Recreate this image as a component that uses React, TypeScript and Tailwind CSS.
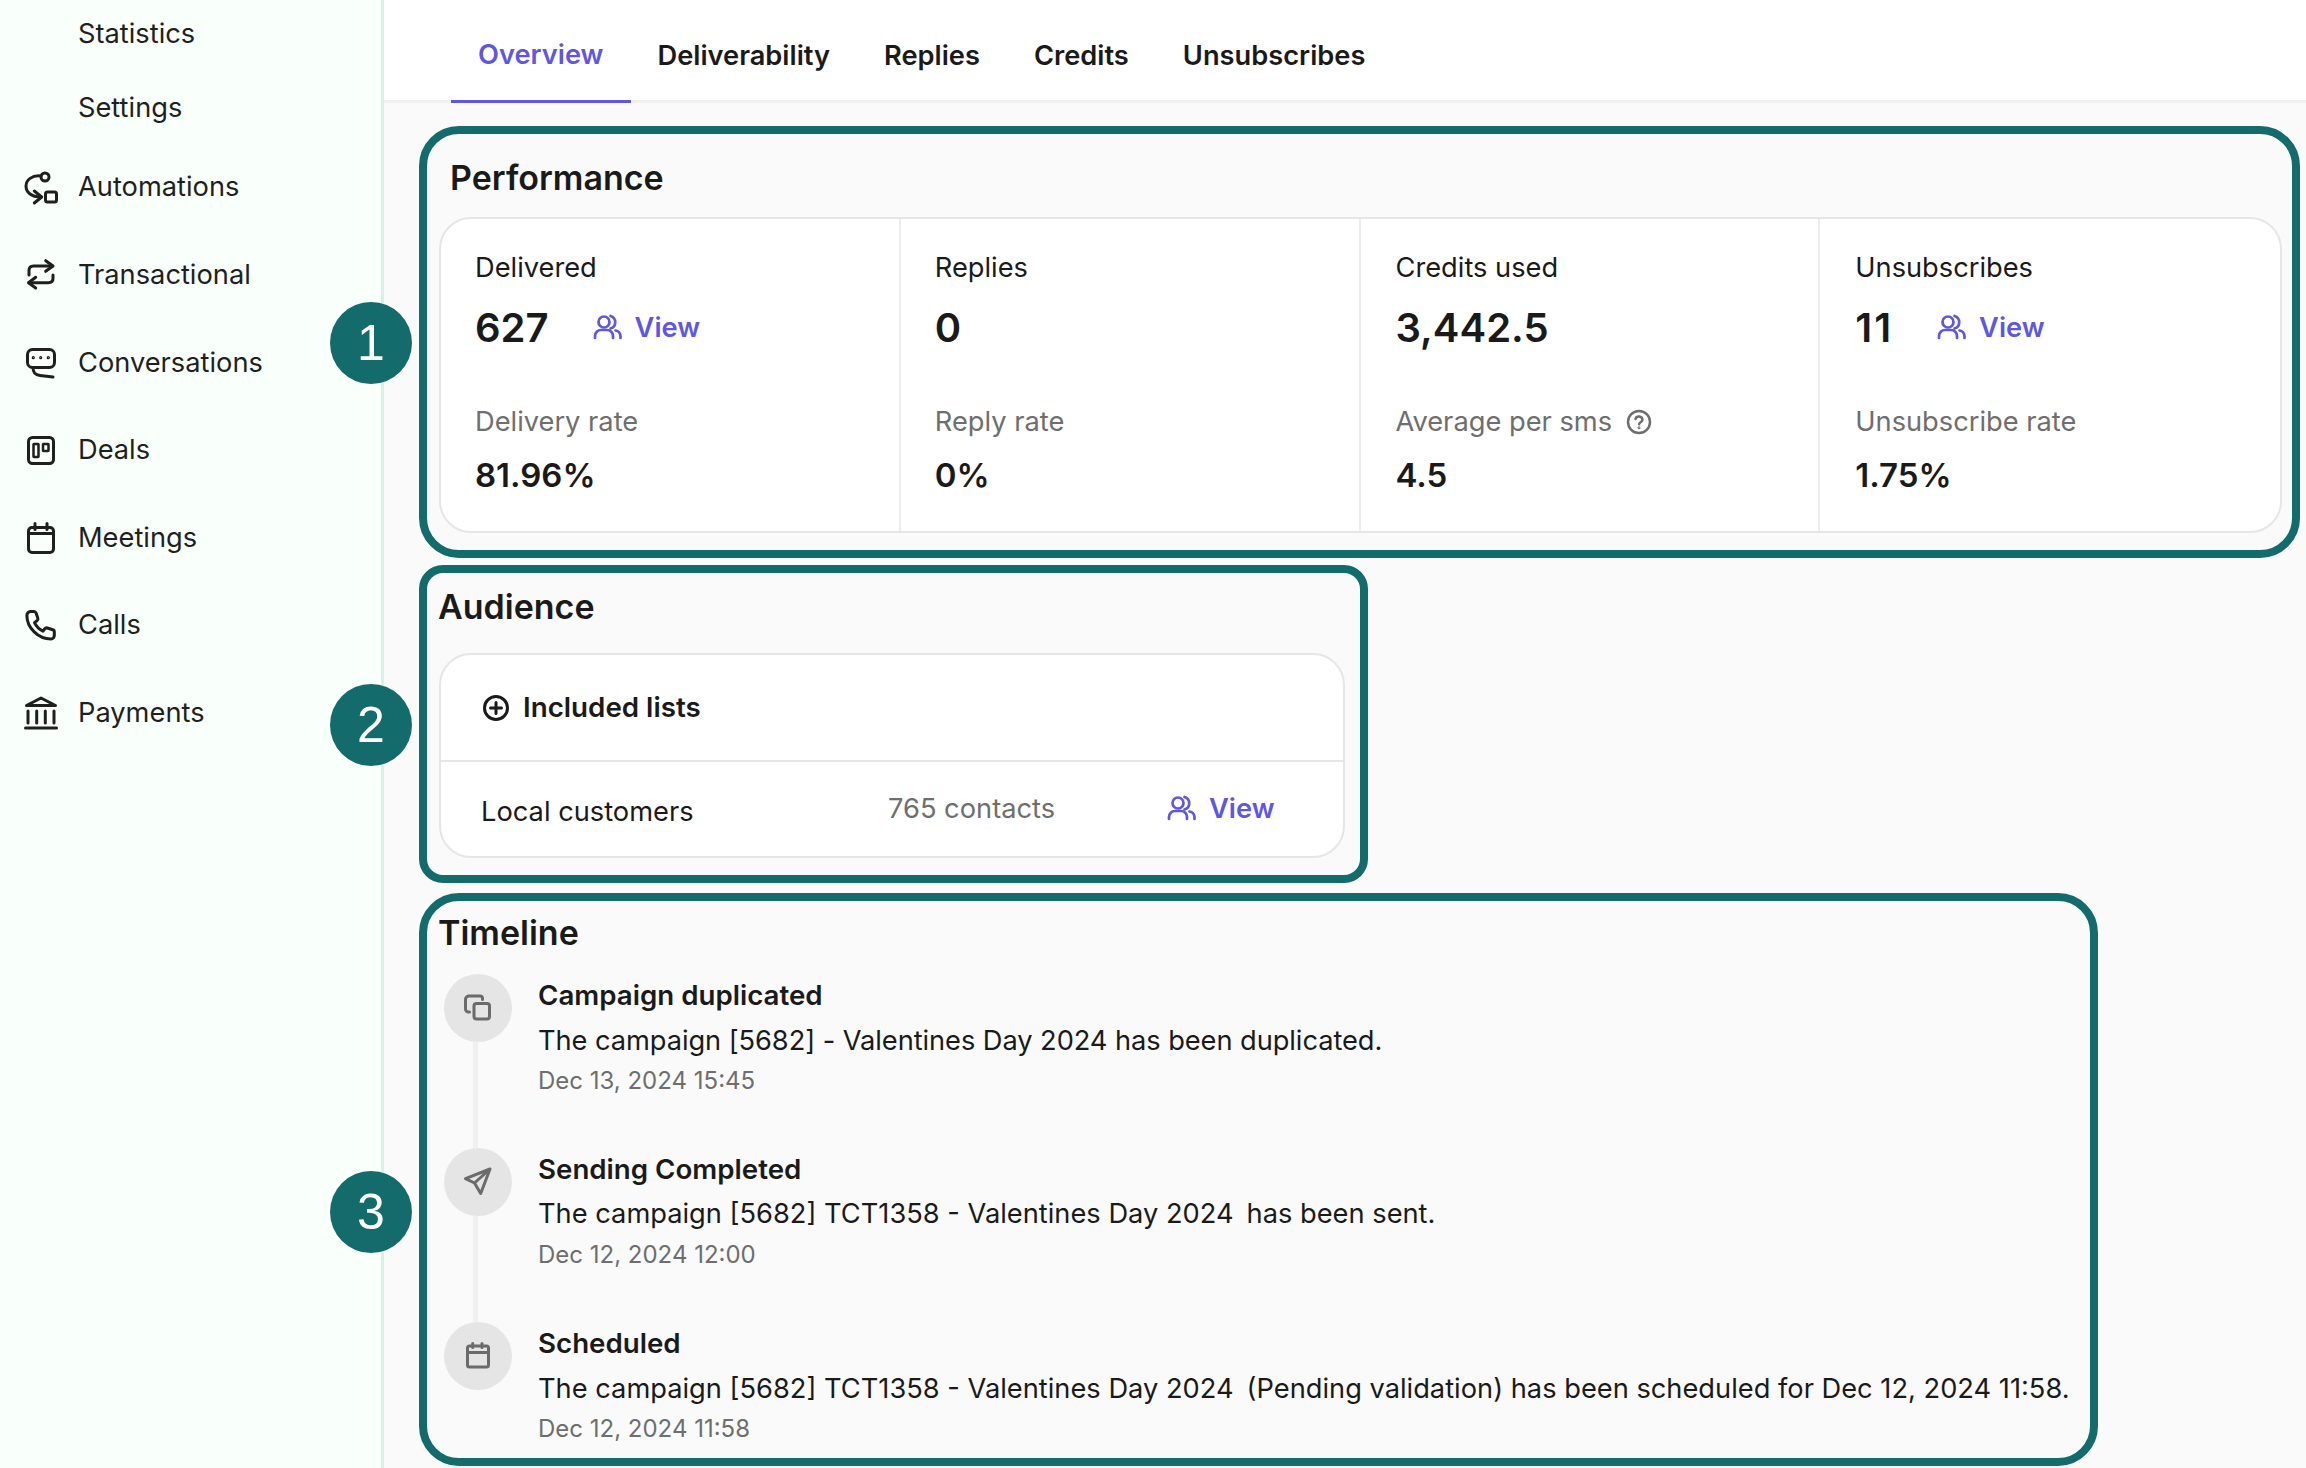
import React from "react";

const S = "none";
function Ico({ size = 36, children, className = "" }: { size?: number; children: React.ReactNode; className?: string }) {
  return (
    <svg width={size} height={size} viewBox={`0 0 ${size} ${size}`} fill={S} stroke="currentColor" strokeWidth={3} strokeLinecap="round" strokeLinejoin="round" className={`shrink-0 ${className}`}>
      {children}
    </svg>
  );
}

const navIcons: Record<string, React.ReactNode> = {
  Automations: (
    <>
      <circle cx="22" cy="7" r="4" />
      <rect x="22.5" y="22" width="11" height="10" rx="2" />
      <path d="M18 6C9 5 3 10 3 16c0 6 5 11 15 11" />
      <path d="M11.3 21l7.4 6-7.4 6" />
    </>
  ),
  Transactional: (
    <>
      <path d="M6 18v-4.5Q6 9 10.5 9H29.5" />
      <path d="M22.7 3.7L30 9l-7.3 5.3" />
      <path d="M30 18v3.3q0 4.4-4.7 4.4H6" />
      <path d="M12.7 20.3L5.5 25.7l7.2 5.3" />
    </>
  ),
  Conversations: (
    <>
      <rect x="4.5" y="4.5" width="27" height="18" rx="5" />
      <path d="M10 22.5c0 5.5 2 7.5 7 8l13 1.5" />
      <circle cx="10.3" cy="12.7" r="0.6" strokeWidth={2} />
      <circle cx="17.7" cy="12.7" r="0.6" strokeWidth={2} />
      <circle cx="25.3" cy="12.7" r="0.6" strokeWidth={2} />
    </>
  ),
  Deals: (
    <>
      <rect x="5.5" y="4.5" width="25" height="26" rx="4" />
      <rect x="10.5" y="11" width="5" height="13" strokeWidth={2.5} rx="0.5" />
      <rect x="20" y="11" width="5.5" height="7" strokeWidth={2.5} rx="0.5" />
    </>
  ),
  Meetings: (
    <>
      <rect x="5.5" y="7.5" width="25" height="25" rx="3.5" />
      <path d="M5.5 13.5h25" />
      <path d="M12 3.5v6M24 3.5v6" />
    </>
  ),
  Calls: (
    <g transform="translate(-1.5 -1.5) scale(1.12)" strokeWidth={2.7}>
      <path d="M8 4.5h3a2.2 2.2 0 0 1 2.1 1.5l1.5 4.6a2 2 0 0 1-.8 2.2l-2.2 1.6a16 16 0 0 0 7.6 7.6l1.6-2.1a2 2 0 0 1 2.2-.7l4.9 1.5a2 2 0 0 1 1.4 2v3.3a3 3 0 0 1-3 3C15 29 4.8 19 4.8 8a3.4 3.4 0 0 1 3.2-3.5z" />
    </g>
  ),
  Payments: (
    <>
      <path d="M3.5 10.5L18 3l14.5 7.5z" />
      <path d="M5 16v12M13.7 16v12M22.3 16v12M31 16v12M2.5 33h31" />
    </>
  ),
};

function ViewLink() {
  return (
    <span className="flex items-center gap-[11px] text-[#5f57e0] font-semibold text-[27.25px] leading-[40px]">
      <svg width="34" height="34" viewBox="0 0 34 34" fill="none" stroke="currentColor" strokeWidth={2.7} strokeLinecap="round" strokeLinejoin="round" className="shrink-0">
        <circle cx="14" cy="11" r="5.5" />
        <path d="M20.5 5a6.5 6.5 0 0 1 0 12.5" />
        <path d="M5 27v-2a6 6 0 0 1 6-6h6a6 6 0 0 1 6 6v2" />
        <path d="M25.5 19.5a6 6 0 0 1 5 5.5v2" />
      </svg>
      View
    </span>
  );
}

function Stat({ label, value, view, rateLabel, rate, help, last, pad }: { label: string; value: string; view?: boolean; rateLabel: string; rate: string; help?: boolean; last?: boolean; pad: string }) {
  return (
    <div className={`flex flex-col pt-[29px] ${pad} ${last ? "" : "border-r-2 border-[#ececec]"}`}>
      <div className="text-[27.25px] leading-[40px] text-[#1a1a1a]">{label}</div>
      <div className="mt-[15px] flex h-[50px] items-center gap-[41px]">
        <span className={`text-[40px] leading-[50px] font-semibold text-[#1a1a1a] ${last ? "tracking-[2px]" : ""}`}>{value}</span>
        {view && <ViewLink />}
      </div>
      <div className="mt-[49px] flex h-[40px] items-center gap-[14px] text-[27.25px] leading-[40px] text-[#6e6e6e]">
        {rateLabel}
        {help && (
          <svg width="26" height="26" viewBox="0 0 26 26" fill="none" stroke="currentColor" strokeWidth={2.5} strokeLinecap="round" className="shrink-0">
            <circle cx="13" cy="13" r="11" />
            <path d="M9.5 10a3.6 3.6 0 0 1 7 .8c0 2.2-3.4 2.6-3.4 4.4" />
            <circle cx="13" cy="18.8" r="0.5" strokeWidth={2} />
          </svg>
        )}
      </div>
      <div className="mt-[11px] text-[33px] leading-[44px] font-semibold text-[#1a1a1a]">{rate}</div>
    </div>
  );
}

const events: { title: string; body: React.ReactNode; date: string; icon: React.ReactNode }[] = [
  {
    title: "Campaign duplicated",
    body: <span className="tracking-[-0.07px]">The campaign [5682] - Valentines Day 2024 has been duplicated.</span>,
    date: "Dec 13, 2024 15:45",
    icon: (
      <>
        <rect x="14" y="13.5" width="15.5" height="15.5" rx="2.5" />
        <path d="M22.5 9.5V8.5a2.5 2.5 0 0 0-2.5-2.5H9a3.5 3.5 0 0 0-3.5 3.5V19a3 3 0 0 0 3 3h1" />
      </>
    ),
  },
  {
    title: "Sending Completed",
    body: (
      <>
        The campaign [5682] TCT1358 - Valentines Day 2024<span className="ml-[13px]">has been sent.</span>
      </>
    ),
    date: "Dec 12, 2024 12:00",
    icon: <path d="M30 5L5.5 14.7l9 4.3 6.2 10.5zM30 5L14.5 19" />,
  },
  {
    title: "Scheduled",
    body: (
      <>
        The campaign [5682] TCT1358 - Valentines Day 2024<span className="ml-[13px]">(Pending validation) has been scheduled for Dec 12, 2024 11:58.</span>
      </>
    ),
    date: "Dec 12, 2024 11:58",
    icon: (
      <>
        <rect x="7.5" y="8" width="21" height="21" rx="2" />
        <path d="M7.5 14.5h21" />
        <path d="M12.7 5.5v4M22 5.5v4" />
      </>
    ),
  },
];

function Badge({ n, className }: { n: number; className: string }) {
  return (
    <div className={`absolute left-[330px] flex h-[82px] w-[82px] items-center justify-center rounded-full bg-[#136b6b] text-[50px] leading-none text-white [font-family:'Liberation_Sans',sans-serif] ${className}`}>
      {n}
    </div>
  );
}

export default function App() {
  return (
    <div className="relative flex h-[1468px] w-[2306px] overflow-hidden bg-[#fafafa] text-[#1a1a1a] [font-family:Inter,sans-serif]">
      <aside className="flex w-[384px] shrink-0 flex-col border-r-[3px] border-[#d9f1ea] bg-[#f9fffa] pt-[1px] text-[27.25px] text-[#1f1f1f]">
        <div className="flex h-[66px] items-center pl-[78px]">Statistics</div>
        <div className="mt-[8px] flex h-[66px] items-center pl-[78px]">Settings</div>
        <div className="mt-[3px] flex flex-col">
          {Object.keys(navIcons).map((k) => (
            <div key={k} className="flex h-[87.6px] items-center gap-[19px] pl-[23px]">
              <Ico>{navIcons[k]}</Ico>
              <span>{k}</span>
            </div>
          ))}
        </div>
      </aside>

      <main className="flex min-w-0 flex-1 flex-col">
        <nav className="flex h-[103px] shrink-0 items-stretch border-b-[3px] border-[#f0f0f0] bg-white pl-[67px] text-[27.25px] font-semibold">
          {["Overview", "Deliverability", "Replies", "Credits", "Unsubscribes"].map((t, i) => (
            <div key={t} className={`-mb-[3px] flex items-center px-[27px] pt-[10px] ${i === 0 ? "border-b-[3px] border-[#5f57e0] text-[#5f57e0]" : "text-[#1a1a1a]"}`}>
              {t}
            </div>
          ))}
        </nav>

        <div className="flex flex-col pl-[35px] pt-[23px]">
          <section className="h-[432px] w-[1881px] rounded-[40px] border-8 border-[#136b6b]">
            <h2 className="ml-[23px] mt-[23px] text-[34px] font-semibold leading-[42px]">Performance</h2>
            <div className="ml-[12px] mt-[18px] grid h-[316px] w-[1843px] grid-cols-4 rounded-[32px] border-2 border-[#e6e6e6] bg-white">
              <Stat pad="pl-[34px]" label="Delivered" value="627" view rateLabel="Delivery rate" rate="81.96%" />
              <Stat pad="pl-[34px]" label="Replies" value="0" rateLabel="Reply rate" rate="0%" />
              <Stat pad="pl-[35px]" label="Credits used" value="3,442.5" rateLabel="Average per sms" rate="4.5" help />
              <Stat pad="pl-[35px]" label="Unsubscribes" value="11" view rateLabel="Unsubscribe rate" rate="1.75%" last />
            </div>
          </section>

          <section className="mt-[7px] h-[318px] w-[949px] rounded-[24px] border-8 border-[#136b6b]">
            <h2 className="ml-[11px] mt-[13px] text-[34px] font-semibold leading-[42px]">Audience</h2>
            <div className="ml-[12px] mt-[25px] h-[205px] w-[906px] rounded-[32px] border-2 border-[#e6e6e6] bg-white">
              <div className="flex h-[107px] items-center gap-[13px] border-b-2 border-[#e6e6e6] pl-[41px] text-[27.75px] font-semibold">
                <svg width="28" height="28" viewBox="0 0 28 28" fill="none" stroke="#1a1a1a" strokeWidth={3} strokeLinecap="round" className="shrink-0">
                  <circle cx="14" cy="14" r="11.5" />
                  <path d="M14 8.5v11M8.5 14h11" />
                </svg>
                Included lists
              </div>
              <div className="flex h-[94px] items-center pl-[40px] text-[27.25px]">
                <span className="w-[407px] pt-[6px]">Local customers</span>
                <span className="w-[276px] text-[#6e6e6e]">765 contacts</span>
                <ViewLink />
              </div>
            </div>
          </section>

          <section className="mt-[10px] h-[573px] w-[1679px] rounded-[40px] border-8 border-[#136b6b]">
            <h2 className="ml-[11px] mt-[11px] text-[34px] font-semibold leading-[42px]">Timeline</h2>
            <div className="ml-[17px] mt-[20px] flex flex-col">
              {events.map((e, i) => (
                <div key={e.title} className={`flex gap-[26px] ${i < 2 ? "h-[174px]" : ""}`}>
                  <div className="flex w-[68px] shrink-0 flex-col">
                    <div className="flex h-[68px] w-[68px] items-center justify-center rounded-full bg-[#e5e5e5] text-[#6b6b6b]">
                      <Ico>{e.icon}</Ico>
                    </div>
                    {i < 2 && <div className="ml-[29px] w-[5px] flex-1 bg-[#f0f0f0]" />}
                  </div>
                  <div className="flex flex-col">
                    <div className="text-[27.7px] font-semibold leading-[42px]">{e.title}</div>
                    <div className={`whitespace-nowrap text-[27.25px] leading-[40px] ${i === 1 ? "mt-[4px]" : "mt-[5px]"}`}>{e.body}</div>
                    <div className={`text-[24px] leading-[36px] text-[#6e6e6e] ${i === 1 ? "mt-[3px]" : "mt-[2px]"}`}>{e.date}</div>
                  </div>
                </div>
              ))}
            </div>
          </section>
        </div>
      </main>

      <Badge n={1} className="top-[302px]" />
      <Badge n={2} className="top-[684px]" />
      <Badge n={3} className="top-[1171px]" />
    </div>
  );
}
